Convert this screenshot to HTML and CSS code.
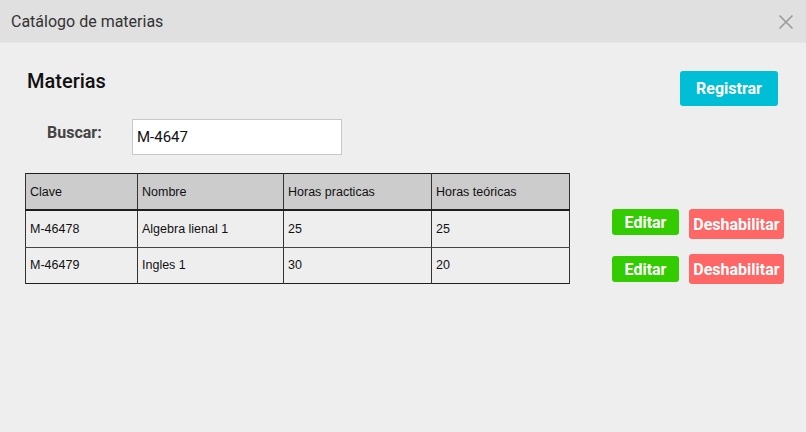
FILE: index.html
```html
<!DOCTYPE html>
<html lang="es">
<head>
<meta charset="utf-8">
<title>Catálogo de materias</title>
<link rel="stylesheet" href="styles.css">
</head>
<body>
<div class="window">
  <div class="titlebar">
    <span class="title">Catálogo de materias</span>
    <svg class="close" width="16" height="16" viewBox="0 0 16 16"><path d="M1.5 1.5 L14.5 14.5 M14.5 1.5 L1.5 14.5" stroke="#9a9a9a" stroke-width="1.6" fill="none"/></svg>
  </div>
  <div class="content">
    <div class="top">
      <h1 class="heading">Materias</h1>
      <button class="btn btn-primary">Registrar</button>
    </div>
    <div class="search">
      <label class="search-label">Buscar:</label>
      <input class="search-input" type="text" value="M-4647">
    </div>
    <div class="main">
      <table class="grid">
        <colgroup>
          <col class="c1"><col class="c2"><col class="c3"><col class="c4">
        </colgroup>
        <thead>
          <tr><th>Clave</th><th>Nombre</th><th>Horas practicas</th><th>Horas teóricas</th></tr>
        </thead>
        <tbody>
          <tr><td>M-46478</td><td>Algebra lienal 1</td><td>25</td><td>25</td></tr>
          <tr><td>M-46479</td><td>Ingles 1</td><td>30</td><td>20</td></tr>
        </tbody>
      </table>
      <div class="actions">
        <div class="action-row">
          <button class="btn btn-edit">Editar</button>
          <button class="btn btn-disable">Deshabilitar</button>
        </div>
        <div class="action-row second">
          <button class="btn btn-edit">Editar</button>
          <button class="btn btn-disable">Deshabilitar</button>
        </div>
      </div>
    </div>
  </div>
</div>
</body>
</html>
```
FILE: styles.css
```css
html, body {
  margin: 0;
  padding: 0;
  background: #eeeeee;
  font-family: Roboto, "Liberation Sans", sans-serif;
}
.window {
  width: 806px;
  height: 432px;
  background: #eeeeee;
}
.titlebar {
  height: 42px;
  background: #e0e0e0;
  border-bottom: 1px solid #e6e6e6;
  display: flex;
  align-items: center;
  justify-content: space-between;
  padding: 0 12px 0 11px;
}
.title {
  font-size: 16px;
  color: #333333;
  padding-top: 1px;
}
.close {
  display: block;
  margin-top: 1px;
}
.content {
  padding: 28px 28px 0 27px;
}
.top {
  display: flex;
  justify-content: space-between;
  align-items: flex-start;
}
.heading {
  margin: 0;
  font-size: 20px;
  font-weight: 500;
  color: #111111;
  line-height: 20px;
}
.btn {
  border: none;
  color: #ffffff;
  font-family: Roboto, "Liberation Sans", sans-serif;
  font-weight: 700;
  border-radius: 3px;
  padding: 0;
  cursor: pointer;
}
.btn-primary {
  width: 98px;
  height: 35px;
  background: #00bed6;
  font-size: 16px;
}
.search {
  display: flex;
  align-items: center;
  margin-top: 13px;
  padding-left: 20px;
}
.search-label {
  width: 85px;
  font-size: 16px;
  font-weight: 700;
  color: #444444;
  margin-top: -10px;
}
.search-input {
  box-sizing: border-box;
  width: 210px;
  height: 36px;
  border: 1px solid #c8c8c8;
  background: #ffffff;
  font-family: Roboto, "Liberation Sans", sans-serif;
  font-size: 15px;
  color: #111111;
  padding: 0 4px;
  outline: none;
}
.main {
  display: flex;
  margin-top: 18px;
  margin-left: -2px;
}
.grid {
  border-collapse: collapse;
  width: 544px;
  table-layout: fixed;
  font-family: "Liberation Sans", sans-serif;
  font-size: 12.5px;
  color: #111111;
  border: 1.5px solid #1e1e1e;
}
.c1 { width: 112px; }
.c2 { width: 146px; }
.c3 { width: 148px; }
.c4 { width: 138px; }
.grid th, .grid td {
  text-align: left;
  font-weight: 400;
  padding: 0 4px;
  border-left: 1px solid #333333;
  border-right: 1px solid #333333;
  white-space: nowrap;
}
.grid th {
  height: 35px;
  background: #cccccc;
  border-bottom: 2px solid #1e1e1e;
}
.grid td {
  height: 35px;
  background: #eeeeee;
}
.grid tbody tr:first-child td {
  border-bottom: 1.5px solid #444444;
}
.actions {
  margin-left: 42px;
  padding-top: 36px;
  display: flex;
  flex-direction: column;
}
.action-row {
  display: flex;
  gap: 10px;
  align-items: flex-start;
}
.action-row.second {
  margin-top: 15px;
  align-items: center;
}
.btn-edit {
  width: 67px;
  height: 26px;
  background: #33cc00;
  font-size: 16px;
}
.btn-disable {
  width: 95px;
  height: 30px;
  background: #ff6666;
  font-size: 16px;
}
```
